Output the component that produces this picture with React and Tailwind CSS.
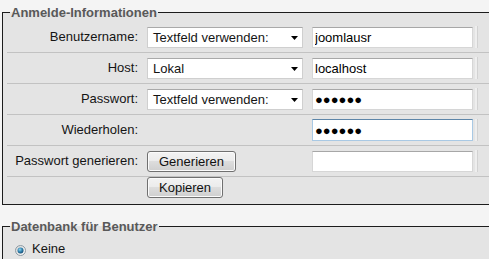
import React from "react";

function Select({ value }) {
  return (
    <div className="flex h-[21px] w-[156px] items-center justify-between border border-[#cfcfcf] border-t-[#a9a9a9] bg-white pl-[5px] pr-[4px]">
      <span className="leading-[19px]">{value}</span>
      <svg width="7" height="4" viewBox="0 0 7 4" className="mt-[1px]">
        <path d="M0 0H7L3.5 4Z" fill="#000" />
      </svg>
    </div>
  );
}

function TextInput({ value = "", focused = false }) {
  const cls = focused
    ? "block h-[22px] w-[161px] border border-[#a9c9e4] border-t-[#5d85a8] bg-white px-[2px] leading-[20px] text-black outline-none"
    : "block h-[21px] w-[161px] border border-[#d6d6d6] border-t-[#a7a7a7] bg-white px-[2px] leading-[19px] text-black outline-none";
  return <input readOnly value={value} className={cls} />;
}

function Button({ children }) {
  return (
    <button className="block h-[21px] rounded-[3px] border border-[#707070] bg-[linear-gradient(#f3f3f3,#ebebeb_50%,#dddddd_50%,#cfcfcf)] px-[11px] leading-[19px] text-[#111] shadow-[inset_0_0_0_1px_#fbfbfb]">
      {children}
    </button>
  );
}

function Edge() {
  return <div className="ml-[2px] h-[22px] w-[3px] border-r border-[#d2d2d2] bg-[#eeeeee]" />;
}

function Row({ label, mid, right }) {
  return (
    <div className="flex h-[31px] items-center border-b border-[#c2c2c2]">
      <div className="w-[135px] pr-[4px] text-right leading-[16px]">{label}</div>
      <div className="ml-[5px] w-[156px]">{mid}</div>
      <div className="ml-[9px] w-[161px]">{right}</div>
      {right ? <Edge /> : null}
    </div>
  );
}

export default function App() {
  return (
    <div className="h-[259px] w-[489px] overflow-hidden bg-[#f4f4f4] pl-[2px] font-['Liberation_Sans',Arial,sans-serif] text-[13px] text-[#141414]">
      <fieldset className="mt-[4px] w-[520px] border border-[#1c1c1c] bg-[#e4e4e4] pb-[6px]">
        <legend className="ml-[7px] px-[1px] text-[13px] font-bold leading-[17px] text-[#595959]">
          Anmelde-Informationen
        </legend>
        <div className="ml-[4px] pt-[1px]">
          <Row
            label="Benutzername:"
            mid={<Select value="Textfeld verwenden:" />}
            right={<TextInput value="joomlausr" />}
          />
          <Row
            label="Host:"
            mid={<Select value="Lokal" />}
            right={<TextInput value="localhost" />}
          />
          <Row
            label="Passwort:"
            mid={<Select value="Textfeld verwenden:" />}
            right={<TextInput value="●●●●●●" />}
          />
          <Row
            label="Wiederholen:"
            mid={null}
            right={<TextInput value="●●●●●●" focused />}
          />
          <Row
            label="Passwort generieren:"
            mid={<Button>Generieren</Button>}
            right={<TextInput value="" />}
          />
          <div className="flex">
            <div className="w-[135px]" />
            <div className="ml-[5px]">
              <Button>Kopieren</Button>
            </div>
          </div>
        </div>
      </fieldset>
      <fieldset className="mt-[13px] w-[520px] border border-[#1c1c1c] bg-[#e4e4e4] pb-[6px]">
        <legend className="ml-[7px] px-[1px] text-[13px] font-bold leading-[17px] text-[#595959]">
          Datenbank für Benutzer
        </legend>
        <div className="flex items-start pl-[12px] pt-[6px] leading-[16px]">
          <svg width="11" height="11" viewBox="0 0 11 11" className="mt-[4px]">
            <defs>
              <radialGradient id="rdot" cx="0.4" cy="0.35" r="0.7">
                <stop offset="0" stopColor="#8fd6f2" />
                <stop offset="0.55" stopColor="#2f7fab" />
                <stop offset="1" stopColor="#17486e" />
              </radialGradient>
              <linearGradient id="rring" x1="0" y1="0" x2="1" y2="1">
                <stop offset="0" stopColor="#d4d4d4" />
                <stop offset="1" stopColor="#ffffff" />
              </linearGradient>
            </defs>
            <circle cx="5.5" cy="5.5" r="5" fill="url(#rring)" stroke="#8d9aa3" />
            <circle cx="5.5" cy="5.5" r="3" fill="url(#rdot)" />
          </svg>
          <span className="ml-[6px]">Keine</span>
        </div>
      </fieldset>
    </div>
  );
}
